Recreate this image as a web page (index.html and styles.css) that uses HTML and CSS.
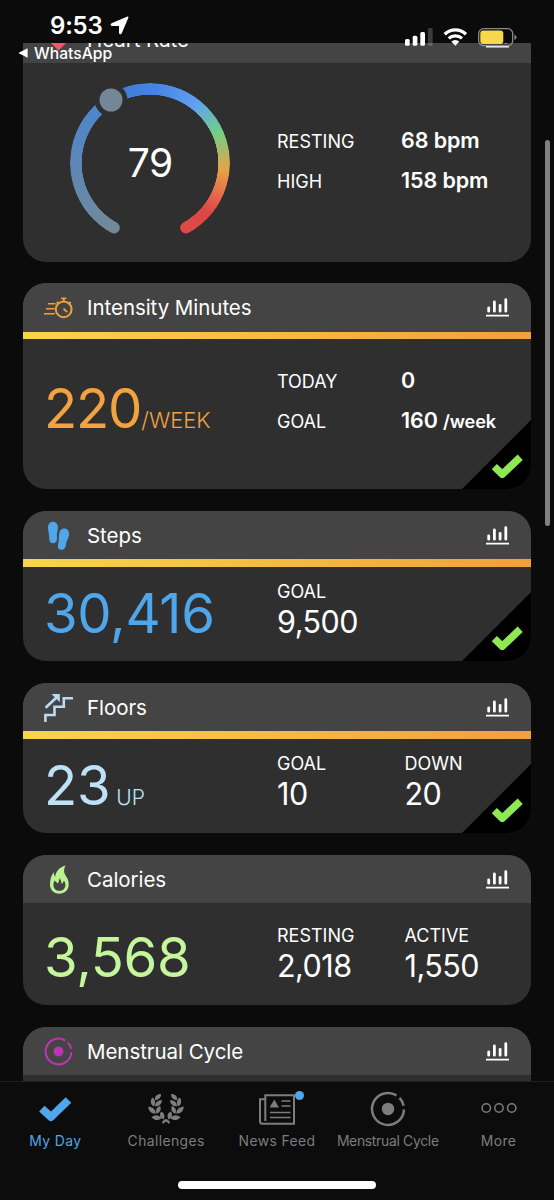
FILE: index.html
```html
<!DOCTYPE html>
<html lang="en">
<head>
  <meta charset="UTF-8" />
  <meta name="viewport" content="width=device-width, initial-scale=1" />
  <title>My Day</title>
  <link rel="stylesheet" href="styles.css">
</head>
<body>

  <!-- shared icons -->
  <svg class="defs" width="0" height="0">
    <symbol id="chart" viewBox="0 0 23 19">
      <path d="M2.7 13.2V9.8M8.4 13.2V4M14.1 13.2V7.3M19.8 13.2V1.6" fill="none" stroke="#fff" stroke-width="2.8" stroke-linecap="round"/>
      <path d="M0 17.7H23" stroke="#fff" stroke-width="1.7"/>
    </symbol>
    <symbol id="check" viewBox="0 0 69 69">
      <path d="M69 0V69H0Z" fill="#000"/>
      <path d="M32.3 46.6L40.3 54.2L58.2 37.2" fill="none" stroke="#8fe951" stroke-width="7.4" stroke-linejoin="round"/>
    </symbol>
    <symbol id="cycle" viewBox="0 0 36 36">
      <path d="M33.99 18.56A16 16 0 1 1 26.48 4.43M29.5 6.9A16 16 0 0 1 33.65 14.67" fill="none" stroke="currentColor" stroke-width="2.5"/>
      <circle cx="18" cy="18" r="6.2" fill="currentColor"/>
    </symbol>
  </svg>

  <div class="phone">
    <header class="status">
      <div class="status-left">
        <div class="clock">
          <span>9:53</span>
          <svg width="19" height="19" viewBox="0 0 19 19"><path d="M17.8 1.2L11 17.2Q10.300 18.200 9.700 17V9.300H2Q.8 8.700 1.800 8Z" fill="#fff" stroke="#fff" stroke-width="1.400" stroke-linejoin="round"/></svg>
        </div>
        <div class="back">
          <svg width="10" height="10" viewBox="0 0 10 10"><path d="M9.600.3V9.700L.3 5Z" fill="#fff"/></svg>
          <span>WhatsApp</span>
        </div>
      </div>
      <div class="status-right">
        <svg width="28" height="18" viewBox="0 0 28 18">
          <rect x="0" y="11" width="4.700" height="6.700" rx="1.500" fill="#fff"/>
          <rect x="7.700" y="7.700" width="4.700" height="10" rx="1.500" fill="#fff"/>
          <rect x="15.300" y="4" width="4.700" height="13.700" rx="1.500" fill="#fff"/>
          <rect x="23" y="0" width="4.700" height="17.700" rx="1.500" fill="#fff" opacity=".2"/>
        </svg>
        <svg width="25" height="18" viewBox="0 0 25 18">
          <path d="M1.700 6.200A15.500 15.500 0 0 1 23 6.200M5.700 10.400A9.800 9.800 0 0 1 19 10.400" fill="none" stroke="#fff" stroke-width="3.300"/>
          <path d="M12.350 17.700L8.300 13.600A5.800 5.800 0 0 1 16.400 13.600Z" fill="#fff"/>
        </svg>
        <svg width="39" height="19" viewBox="0 0 39 19">
          <rect x=".7" y=".7" width="34" height="17" rx="5" fill="none" stroke="#8a8a8a" stroke-width="1.300"/>
          <rect x="2.300" y="2.600" width="23" height="13.300" rx="3" fill="#f7d84a"/>
          <path d="M36.500 6.500Q38.500 7.500 38.500 9.200T36.500 12Z" fill="#8a8a8a"/>
        </svg>
      </div>
    </header>

    <main class="feed">
      <section class="card card-heart">
        <div class="card-head">
          <svg class="icon" viewBox="0 0 29 29"><path d="M14.500 26.500L3 15C-2 9 6-1 14.500 6C23-1 31 9 26 15Z" fill="#f0566e"/></svg>
          <h2>Heart Rate</h2>
          <svg class="chart"><use href="#chart"/></svg>
        </div>
        <div class="card-body">
          <div class="gauge">
            <div class="gauge-ring"></div>
            <svg class="gauge-marks" viewBox="0 0 160 160">
              <circle cx="44.100" cy="144.700" r="5.750" fill="#708a9a"/>
              <circle cx="115.900" cy="144.700" r="5.750" fill="#df4a47"/>
              <circle cx="41" cy="17" r="16.500" fill="#2f2f2f"/>
              <circle cx="41" cy="17" r="11.500" fill="#748797"/>
            </svg>
            <span class="gauge-value">79</span>
          </div>
          <dl class="rows">
            <dt>RESTING</dt><dd>68 bpm</dd>
            <dt>HIGH</dt><dd>158 bpm</dd>
          </dl>
        </div>
      </section>

      <section class="card card-intensity">
        <div class="card-head">
          <svg class="icon" viewBox="0 0 29 29" fill="none" stroke="#f0a040">
            <circle cx="19.700" cy="16.300" r="7.900" stroke-width="2"/>
            <path d="M19.700 8V5.500M17.200 5.400H22.300M19.500 15.800L23.200 19M12.600 10.400L14.200 9M26.800 10.400L25.200 9" stroke-width="1.800"/>
            <path d="M4 10.700H11.500M2 15.700H10.500M0 20.700H10.800" stroke-width="1.400"/>
          </svg>
          <h2>Intensity Minutes</h2>
          <svg class="chart"><use href="#chart"/></svg>
        </div>
        <div class="goal-bar"></div>
        <div class="card-body">
          <div class="big orange">220<small>/WEEK</small></div>
          <dl class="rows">
            <dt>TODAY</dt><dd>0</dd>
            <dt>GOAL</dt><dd>160 <small>/week</small></dd>
          </dl>
        </div>
        <svg class="done"><use href="#check"/></svg>
      </section>

      <section class="card">
        <div class="card-head">
          <svg class="icon" viewBox="0 0 29 29" fill="#4fa6ea">
            <path d="M9 .7C12.300.7 14 3.500 13.900 7C13.800 10 12.600 12 12.900 15C13.300 18.500 13 22.200 9.300 22.200C5.600 22.200 5.200 19.500 5.200 16C5.200 12.500 4 10 4 6.500C4 3 6 .7 9 .7Z"/>
            <path d="M20.800 7.500C24 7.800 25.500 10.800 25 14.200C24.500 17.500 22.600 19.500 22.100 22.800C21.500 26.500 20.500 29.200 17 28.800C13.500 28.400 13.600 25.500 14.300 22.200C15 19 14.700 16.500 15.100 13C15.500 9.500 17.700 7.200 20.800 7.500Z"/>
          </svg>
          <h2>Steps</h2>
          <svg class="chart"><use href="#chart"/></svg>
        </div>
        <div class="goal-bar"></div>
        <div class="card-body">
          <div class="big blue">30,416</div>
          <div class="stat"><span>GOAL</span><b>9,500</b></div>
        </div>
        <svg class="done"><use href="#check"/></svg>
      </section>

      <section class="card">
        <div class="card-head">
          <svg class="icon" viewBox="0 0 29 29">
            <path d="M1.400 29V22H10.500V13.700H19.800V5.200H29M1.600 14.800L13 4" fill="none" stroke="#b9dcf2" stroke-width="2.600"/>
            <path d="M7.500 .9H15.800V9.200Z" fill="#b9dcf2"/>
          </svg>
          <h2>Floors</h2>
          <svg class="chart"><use href="#chart"/></svg>
        </div>
        <div class="goal-bar"></div>
        <div class="card-body">
          <div class="big pale">23<small class="up">UP</small></div>
          <div class="stat"><span>GOAL</span><b>10</b></div>
          <div class="stat"><span>DOWN</span><b>20</b></div>
        </div>
        <svg class="done"><use href="#check"/></svg>
      </section>

      <section class="card card-calories">
        <div class="card-head">
          <svg class="icon" viewBox="0 0 29 29">
            <path fill-rule="evenodd" d="M21.500.4C19.400 4 19.600 7.500 21.800 10.800C23.500 13.300 24.700 15.800 24.700 19.200C24.700 25.200 20.500 28.700 15.300 28.700C10 28.700 6 25.300 6 19.300C6 14.800 7 10.500 10 7C9.800 9 10.200 10.500 11.200 11.800C11.500 6.500 15.500 2 21.500.4ZM15.500 13.200C15.300 15.500 14.500 17.200 13.800 18.600L10.600 15.600C9.800 17 9.400 18.300 9.400 19.700C9.400 23.500 11.900 25.800 15.300 25.800C18.900 25.800 21.400 23.500 21.400 20C21.400 18.200 20.800 16.800 19.900 15.500C19.600 17 18.900 18.200 17.400 18.800C17.500 16.500 16.800 14.500 15.500 13.200Z" fill="#bdf293"/>
          </svg>
          <h2>Calories</h2>
          <svg class="chart"><use href="#chart"/></svg>
        </div>
        <div class="card-body">
          <div class="big green">3,568</div>
          <div class="stat"><span>RESTING</span><b>2,018</b></div>
          <div class="stat"><span>ACTIVE</span><b>1,550</b></div>
        </div>
      </section>

      <section class="card">
        <div class="card-head">
          <svg class="icon purple" viewBox="0 0 36 36"><use href="#cycle"/></svg>
          <h2>Menstrual Cycle</h2>
          <svg class="chart"><use href="#chart"/></svg>
        </div>
      </section>
    </main>

    <nav class="tabs">
      <a class="tab active">
        <svg width="36" height="36" viewBox="0 0 36 36"><path d="M4.800 17.600L14 26L31.500 9" fill="none" stroke="#4fa6ea" stroke-width="8" stroke-linejoin="round"/></svg>
        <span>My Day</span>
      </a>
      <a class="tab">
        <svg width="36" height="36" viewBox="0 0 36 36">
          <g id="laurel" fill="currentColor">
            <path d="M13 3C8.500 3 6.500 5.500 7 9C11 9 13 6.500 13 3Z"/>
            <path d="M4.300 6.500C1.800 9.500 2.500 13.500 5.800 15.500C8 12 7.500 8.500 4.300 6.500Z"/>
            <path d="M14 9.300C9.500 9 7 11.500 7 15.500C11 15.500 14 13 14 9.300Z"/>
            <path d="M.2 15.800C.5 20.500 3.500 23 7.800 22.500C7.700 18.300 4.500 15.800.2 15.800Z"/>
            <path d="M12.200 15C8.500 16 7.200 19 8.500 22.800C12.200 21.500 13.500 18.500 12.200 15Z"/>
            <path d="M3.500 26.300C6.500 29.800 10.500 30 13.700 27C10.500 23.500 6.500 23.300 3.500 26.300Z"/>
            <path d="M13.300 20.500C10.800 23.500 11.800 26.800 15.500 28.500C17.300 25.300 16.500 22 13.300 20.500Z"/>
            <path d="M13.800 31C15.500 29 17 28.300 19.500 28.300L18.800 30.500C17.300 30.700 16.300 31.600 15.300 32.900Z"/>
          </g>
          <use href="#laurel" transform="matrix(-1 0 0 1 36 0)"/>
        </svg>
        <span>Challenges</span>
      </a>
      <a class="tab">
        <div class="badge-wrap">
          <svg width="36" height="36" viewBox="0 0 36 36" fill="none" stroke="currentColor" stroke-width="2">
            <path d="M6.300 30V4.300H35V32.800H3.500Q1 32.800 1 30.300V8.300H6.300"/>
            <path d="M22.500 10H31.500M22.500 15H31.500M11 21.500H31.500M11 26.500H31.500" stroke-width="1.700"/>
            <path d="M15.300 8.500L20 16.500H10.600Z" fill="currentColor" stroke="none"/>
          </svg>
          <i class="dot"></i>
        </div>
        <span>News Feed</span>
      </a>
      <a class="tab">
        <svg width="36" height="36"><use href="#cycle"/></svg>
        <span class="tight">Menstrual Cycle</span>
      </a>
      <a class="tab">
        <svg width="36" height="36" viewBox="0 0 36 36" fill="none" stroke="currentColor" stroke-width="1.500"><circle cx="5.300" cy="17" r="4.200"/><circle cx="18" cy="17" r="4.200"/><circle cx="30.700" cy="17" r="4.200"/></svg>
        <span>More</span>
      </a>
    </nav>
    <div class="scrollbar"></div>
    <div class="home"></div>
  </div>

</body>
</html>
```
FILE: styles.css
```css
* {
  box-sizing: border-box;
}
body {
  margin: 0;
  background: #0b0b0b;
  color: #fff;
  font-family: Inter, "Liberation Sans", sans-serif;
}
svg {
  display: block;
  flex: none;
}
.defs {
  position: absolute;
}
.phone {
  position: relative;
  display: flex;
  flex-direction: column;
  width: 554px;
  height: 1200px;
  overflow: hidden;
}

/* status bar */
.status {
  position: relative;
  z-index: 2;
  flex: none;
  display: flex;
  justify-content: space-between;
  height: 43px;
  padding: 0 37px 0 18px;
}
.clock {
  display: flex;
  align-items: center;
  gap: 7px;
  height: 30px;
  margin: 10px 0 1px 32px;
  font-size: 24px;
  font-weight: 600;
  letter-spacing: -0.2px;
}
.back {
  display: flex;
  align-items: center;
  gap: 6px;
  height: 24px;
  font-size: 15.7px;
  font-weight: 500;
}
.status-right {
  display: flex;
  gap: 10px;
  padding-top: 28px;
}

/* cards */
.feed {
  flex: none;
  height: 1038px;
  padding: 0 23px;
  overflow: hidden;
}
.card {
  position: relative;
  height: 150.5px;
  margin-bottom: 21.5px;
  border-radius: 23px;
  background: #2f2f2f;
  overflow: hidden;
}
.card-heart {
  height: 247.2px;
  margin-top: -28.5px;
}
.card-intensity {
  height: 206.3px;
}
.card-head {
  display: flex;
  align-items: center;
  height: 48.5px;
  padding: 0 22px 0 21px;
  background: #444;
}
.icon {
  width: 29px;
  height: 29px;
}
.purple {
  color: #bb36b4;
}
h2 {
  flex: 1;
  margin: 1px 0 0 14px;
  font-size: 20.5px;
  font-weight: 400;
  letter-spacing: -0.05px;
}
.chart {
  width: 23px;
  height: 19px;
}
.goal-bar {
  height: 7.3px;
  background: linear-gradient(90deg, #f8d54c, #f29f3c);
}
.card-body {
  display: grid;
  grid-template-columns: 232px 127.5px 1fr;
  align-items: start;
  padding: 16.5px 0 0 22px;
}
.card-calories .card-body {
  padding-top: 23.7px;
}
.card-intensity .card-body {
  padding-top: 22.5px;
}
.card-heart .card-body {
  padding-top: 20px;
}
.big {
  height: 60px;
  margin-left: -1px;
  font-size: 54.5px;
  line-height: 60px;
  font-weight: 375;
  letter-spacing: -0.3px;
  white-space: nowrap;
}
.card-intensity .big {
  margin-top: 16.5px;
  letter-spacing: -1.2px;
}
.big small {
  font-size: 22px;
  font-weight: 325;
  letter-spacing: 0;
}
.big .up {
  margin-left: 6px;
  font-size: 21px;
}
.orange {
  color: #f2a23e;
}
.blue {
  color: #4fa6ea;
}
.pale {
  color: #bde1f6;
}
.green {
  color: #c5f59c;
}
.stat {
  display: flex;
  flex-direction: column;
  font-size: 18px;
  line-height: 18px;
}
.stat b {
  margin-top: 5px;
  font-size: 30.5px;
  line-height: 32px;
  font-weight: 400;
  letter-spacing: -0.5px;
}
.rows {
  grid-column: 2 / 4;
  display: grid;
  grid-template-columns: 124px 1fr;
  grid-auto-rows: 39.5px;
  margin: 0;
  font-size: 18px;
  line-height: 41.5px;
}
.card-heart .rows {
  margin-top: 38px;
}
.rows dd {
  margin: 0;
  font-size: 21.5px;
  line-height: 39.5px;
  font-weight: 600;
  letter-spacing: -0.1px;
}
.rows small {
  font-size: 18.1px;
}
.done {
  position: absolute;
  right: 0;
  bottom: 0;
  width: 69px;
  height: 69px;
}

/* heart rate gauge */
.gauge {
  display: grid;
  place-items: center;
  width: 160px;
  height: 160px;
  margin-left: 25.3px;
}
.gauge > * {
  grid-area: 1 / 1;
}
.gauge-ring {
  width: 160px;
  height: 160px;
  border-radius: 50%;
  background: conic-gradient(from 209deg, #708a9a 0deg, #5886bd 75deg, #4c86cd 110deg, #3f80dc 135deg, #4584e0 155deg, #619ff5 188deg, #72cf86 217deg, #e6a346 246deg, #e5604a 270deg, #dc4646 282deg, #df4a47 302deg, transparent 302deg);
  -webkit-mask: radial-gradient(circle closest-side, transparent 68px, #000 68.5px);
  mask: radial-gradient(circle closest-side, transparent 68px, #000 68.5px);
}
.gauge-marks {
  z-index: 1;
  width: 160px;
  height: 160px;
}
.gauge-value {
  z-index: 2;
  font-size: 39px;
  line-height: 40px;
  font-weight: 400;
  letter-spacing: -0.5px;
}

/* bottom tabs */
.tabs {
  flex: none;
  display: grid;
  grid-template-columns: repeat(5, 1fr);
  height: 119px;
  border-top: 1px solid #202020;
  background: #0c0c0c;
}
.tab {
  display: flex;
  flex-direction: column;
  align-items: center;
  padding-top: 9px;
  color: #7d7d7d;
  font-size: 13.9px;
  line-height: 20px;
  letter-spacing: 0.4px;
  white-space: nowrap;
}
.tab span {
  margin-top: 4px;
}
.active {
  color: #4fa6ea;
}
.tight {
  letter-spacing: -0.3px;
}
.badge-wrap {
  position: relative;
}
.dot {
  position: absolute;
  top: 0;
  right: -9px;
  width: 9px;
  height: 9px;
  border-radius: 50%;
  background: #4fa6ea;
}
.scrollbar {
  position: absolute;
  top: 140px;
  right: 4px;
  width: 5px;
  height: 386px;
  border-radius: 3px;
  background: #808080;
}
.home {
  position: absolute;
  left: 178px;
  bottom: 11px;
  width: 198px;
  height: 8px;
  border-radius: 4px;
  background: #fff;
}
```
